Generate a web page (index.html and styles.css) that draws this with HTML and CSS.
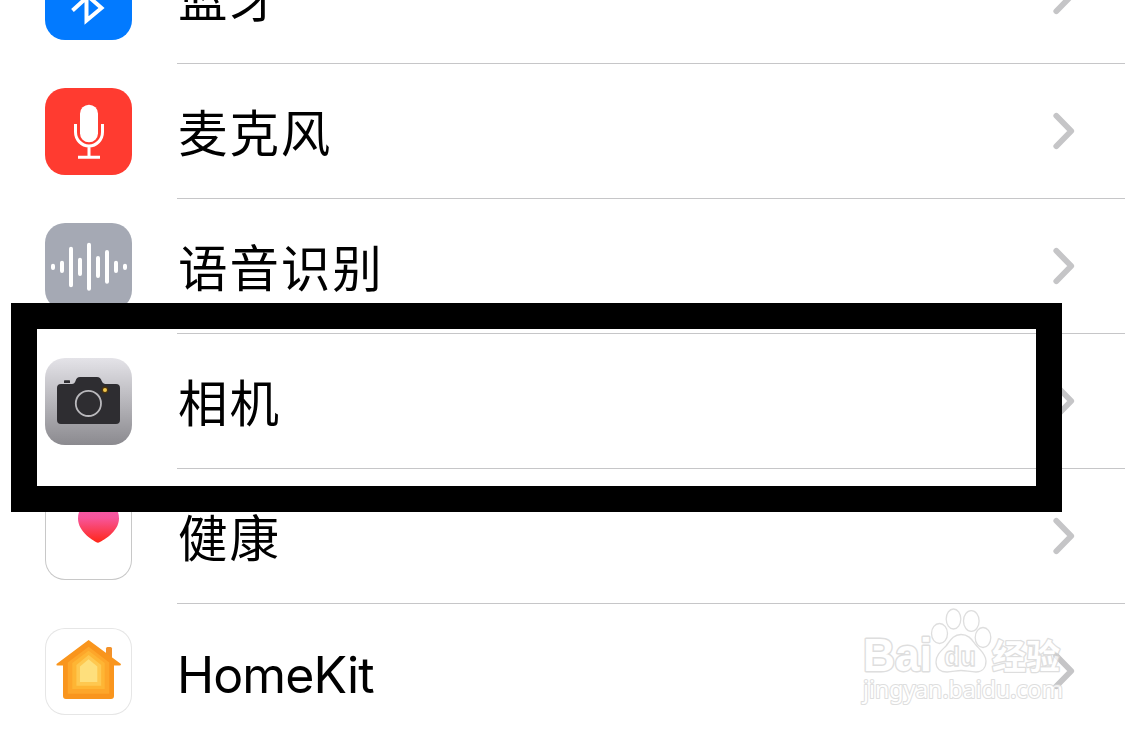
FILE: index.html
```html
<!DOCTYPE html>
<html lang="zh-CN">
<head>
    <meta charset="UTF-8">
    <meta name="viewport" content="width=device-width, initial-scale=1.0">
    <title>隐私</title>
    <link rel="stylesheet" href="styles.css">
</head>
<body>

    <svg width="0" height="0" class="defs">
        <symbol id="chevron" viewBox="0 0 22 38">
            <path d="M3.3 3.8 L18.2 19 L3.3 34.2" fill="none" stroke="#c5c5c7" stroke-width="5.8" stroke-linecap="round" stroke-linejoin="round"/>
        </symbol>
    </svg>

    <div class="list">
        <div class="row">
            <svg class="icon bluetooth" viewBox="0 0 87 87">
                <path d="M27.5 57.5 L56.5 31 L41.5 17 V67.5 L56.5 55 L27.5 29.5" fill="none" stroke="#fff" stroke-width="4"/>
            </svg>
            <div class="row-body">
                <span class="label">蓝牙</span>
                <svg class="chevron"><use href="#chevron"/></svg>
            </div>
        </div>

        <div class="row">
            <svg class="icon microphone" viewBox="0 0 87 87">
                <rect x="35" y="16.7" width="18" height="37.6" rx="9" fill="#fff"/>
                <path d="M30.5 36 V44 A13.5 14 0 0 0 57.5 44 V36 M44 58 V69 M33 69.3 H55" fill="none" stroke="#fff" stroke-width="3"/>
            </svg>
            <div class="row-body">
                <span class="label">麦克风</span>
                <svg class="chevron"><use href="#chevron"/></svg>
            </div>
        </div>

        <div class="row">
            <svg class="icon speech" viewBox="0 0 87 87">
                <path d="M8 42.7 V45 M17 39.7 V48 M26 25.7 V62.3 M35 36.7 V51 M44 21.7 V65.7 M53 35 V53 M62 29 V58.7 M71 39.7 V48 M80 42.7 V45" stroke="#fff" stroke-width="4" stroke-linecap="round"/>
            </svg>
            <div class="row-body">
                <span class="label">语音识别</span>
                <svg class="chevron"><use href="#chevron"/></svg>
            </div>
        </div>

        <div class="row">
            <svg class="icon camera" viewBox="0 0 87 87">
                <rect x="19" y="22.3" width="6" height="2.8" rx="0.6" fill="#2e2d31"/>
                <path d="M16 26 H27 Q29.5 26 30.5 23 Q31.5 19 35 19 H52 Q55.5 19 56.7 23 Q57.8 26 60 26 H71 Q75 26 75 30 V62 Q75 66 71 66 H16 Q12 66 12 62 V30 Q12 26 16 26 Z" fill="#2e2d31"/>
                <circle cx="43.4" cy="45.4" r="12.6" fill="none" stroke="#b9b8bc" stroke-width="1.8"/>
                <circle cx="60" cy="32" r="3.4" fill="#4a3410"/>
                <circle cx="60" cy="32" r="2" fill="#f3c84c"/>
            </svg>
            <div class="row-body">
                <span class="label">相机</span>
                <svg class="chevron"><use href="#chevron"/></svg>
            </div>
        </div>

        <div class="row">
            <svg class="icon health" viewBox="0 0 87 87">
                <defs>
                    <linearGradient id="heart" x1="0" y1="0" x2="0" y2="1">
                        <stop offset="0" stop-color="#f45cb0"/>
                        <stop offset="0.35" stop-color="#f7559a"/>
                        <stop offset="1" stop-color="#ff2617"/>
                    </linearGradient>
                </defs>
                <path d="M53 49.8 C49 48.5 33 39 33 25.5 C33 17 37.5 11.5 44 11.5 C48 11.5 51.5 13.5 53.5 17 C55.5 13.5 59 11.5 63 11.5 C69.5 11.5 74 17 74 25.5 C74 39 57 48.5 53 49.8 Z" fill="url(#heart)"/>
            </svg>
            <div class="row-body">
                <span class="label">健康</span>
                <svg class="chevron"><use href="#chevron"/></svg>
            </div>
        </div>

        <div class="row">
            <svg class="icon home" viewBox="0 0 87 87">
                <path d="M61 30 V20.5 Q61 19 62.5 19 H65.5 Q67 19 67 20.5 V34 Z" fill="#f3922a"/>
                <path d="M43.6 12 L76 36 Q76 37.5 74.5 37.5 H69 V68 Q69 71 66 71 H21 Q18 71 18 68 V37.5 H12.5 Q11 37.5 11.5 36 Z" fill="#f9951d"/>
                <path d="M43.6 18.7 L64.3 34.5 V65.7 H22.8 V34.5 Z" fill="#fda62a"/>
                <path d="M43.6 22.7 L59.7 35 V61 H27.3 V35 Z" fill="#feb534"/>
                <path d="M43.6 27 L56.2 37 V57.7 H31.4 V37 Z" fill="#fec850"/>
                <path d="M43.6 31.3 L52.3 38.5 V54 H35 V38.5 Z" fill="#fedf7c"/>
            </svg>
            <div class="row-body">
                <span class="label latin">HomeKit</span>
                <svg class="chevron"><use href="#chevron"/></svg>
            </div>
        </div>
    </div>

    <div class="highlight"></div>

    <svg class="watermark" viewBox="0 0 275 139">
        <text x="13" y="80.5" class="brand" textLength="69" lengthAdjust="spacingAndGlyphs">Bai</text>
        <ellipse cx="89.5" cy="43.5" rx="8" ry="10"/>
        <ellipse cx="103.5" cy="29" rx="7.3" ry="10"/>
        <ellipse cx="121.3" cy="31" rx="7.8" ry="10.3"/>
        <ellipse cx="133" cy="47.5" rx="7.8" ry="10"/>
        <path d="M111 44.5 C103 44.5 100 51 96 56 C91 61 86 65 86 72 C86 79 91 82 97 82 C103 82 106 80.5 111 80.5 C116 80.5 120 82 126 82 C132 82 136 78 136 71 C136 64 130 60 126 55 C122 50 119 44.5 111 44.5 Z"/>
        <text x="94" y="76" class="du" textLength="32" lengthAdjust="spacingAndGlyphs">du</text>
        <text x="142" y="79" class="cn" textLength="68" lengthAdjust="spacingAndGlyphs">经验</text>
        <text x="13" y="108" class="url" textLength="200" lengthAdjust="spacingAndGlyphs">jingyan.baidu.com</text>
    </svg>

</body>
</html>
```
FILE: styles.css
```css
body {
    margin: 0;
    height: 729px;
    overflow: hidden;
    position: relative;
    background: #fff;
    color: #000;
    font-family: "Noto Sans CJK SC", sans-serif;
}

.defs {
    display: block;
}

/* the list is scrolled, so the first row starts above the window */
.list {
    margin-top: -71px;
}

.row {
    display: flex;
    align-items: center;
    gap: 45px;
    height: 135px;
    padding-left: 45px;
}

.icon {
    width: 87px;
    height: 87px;
    border-radius: 20px;
    flex-shrink: 0;
}

.bluetooth {
    background: #027aff;
}

.microphone {
    background: #ff3b30;
}

.speech {
    background: #a5a9b4;
}

.camera {
    background: linear-gradient(#e4e3e8, #8b8a8f);
}

.health {
    box-shadow: inset 0 0 0 1px #c8c8c8;
}

.home {
    box-shadow: inset 0 0 0 1px #e6e6e6;
}

.row-body {
    flex: 1;
    height: 100%;
    box-sizing: border-box;
    display: flex;
    align-items: center;
    justify-content: space-between;
    padding-right: 50px;
    border-bottom: 1px solid #c6c6c8;
}

.row:last-child .row-body {
    border-bottom-color: transparent;
}

.label {
    font-size: 49.5px;
    line-height: 60px;
    letter-spacing: 1.9px;
    padding-left: 1px;
    padding-bottom: 1px;
}

.latin {
    font-family: Inter, sans-serif;
    font-size: 50px;
    letter-spacing: -0.9px;
    padding-top: 7px;
    padding-left: 0;
    padding-bottom: 0;
}

.chevron {
    width: 22px;
    height: 38px;
}

.highlight {
    position: absolute;
    left: 11px;
    top: 303px;
    width: 999px;
    height: 157px;
    border: 26px solid #000;
}

.watermark {
    position: absolute;
    left: 850px;
    top: 590px;
    width: 275px;
    height: 139px;
    fill: #fff;
    stroke: #d4d4d4;
    stroke-width: 1.3;
    stroke-linejoin: round;
    opacity: 0.75;
}

.brand {
    font: bold 46px "Liberation Sans", sans-serif;
    stroke-width: 3;
    paint-order: stroke;
}

.du {
    font: bold 27px "Liberation Sans", sans-serif;
}

.cn {
    font: bold 34px "Noto Sans CJK SC", sans-serif;
    stroke-width: 2.6;
    paint-order: stroke;
}

.url {
    font: 24px "Noto Sans", sans-serif;
    stroke-width: 2.2;
    paint-order: stroke;
}
```
